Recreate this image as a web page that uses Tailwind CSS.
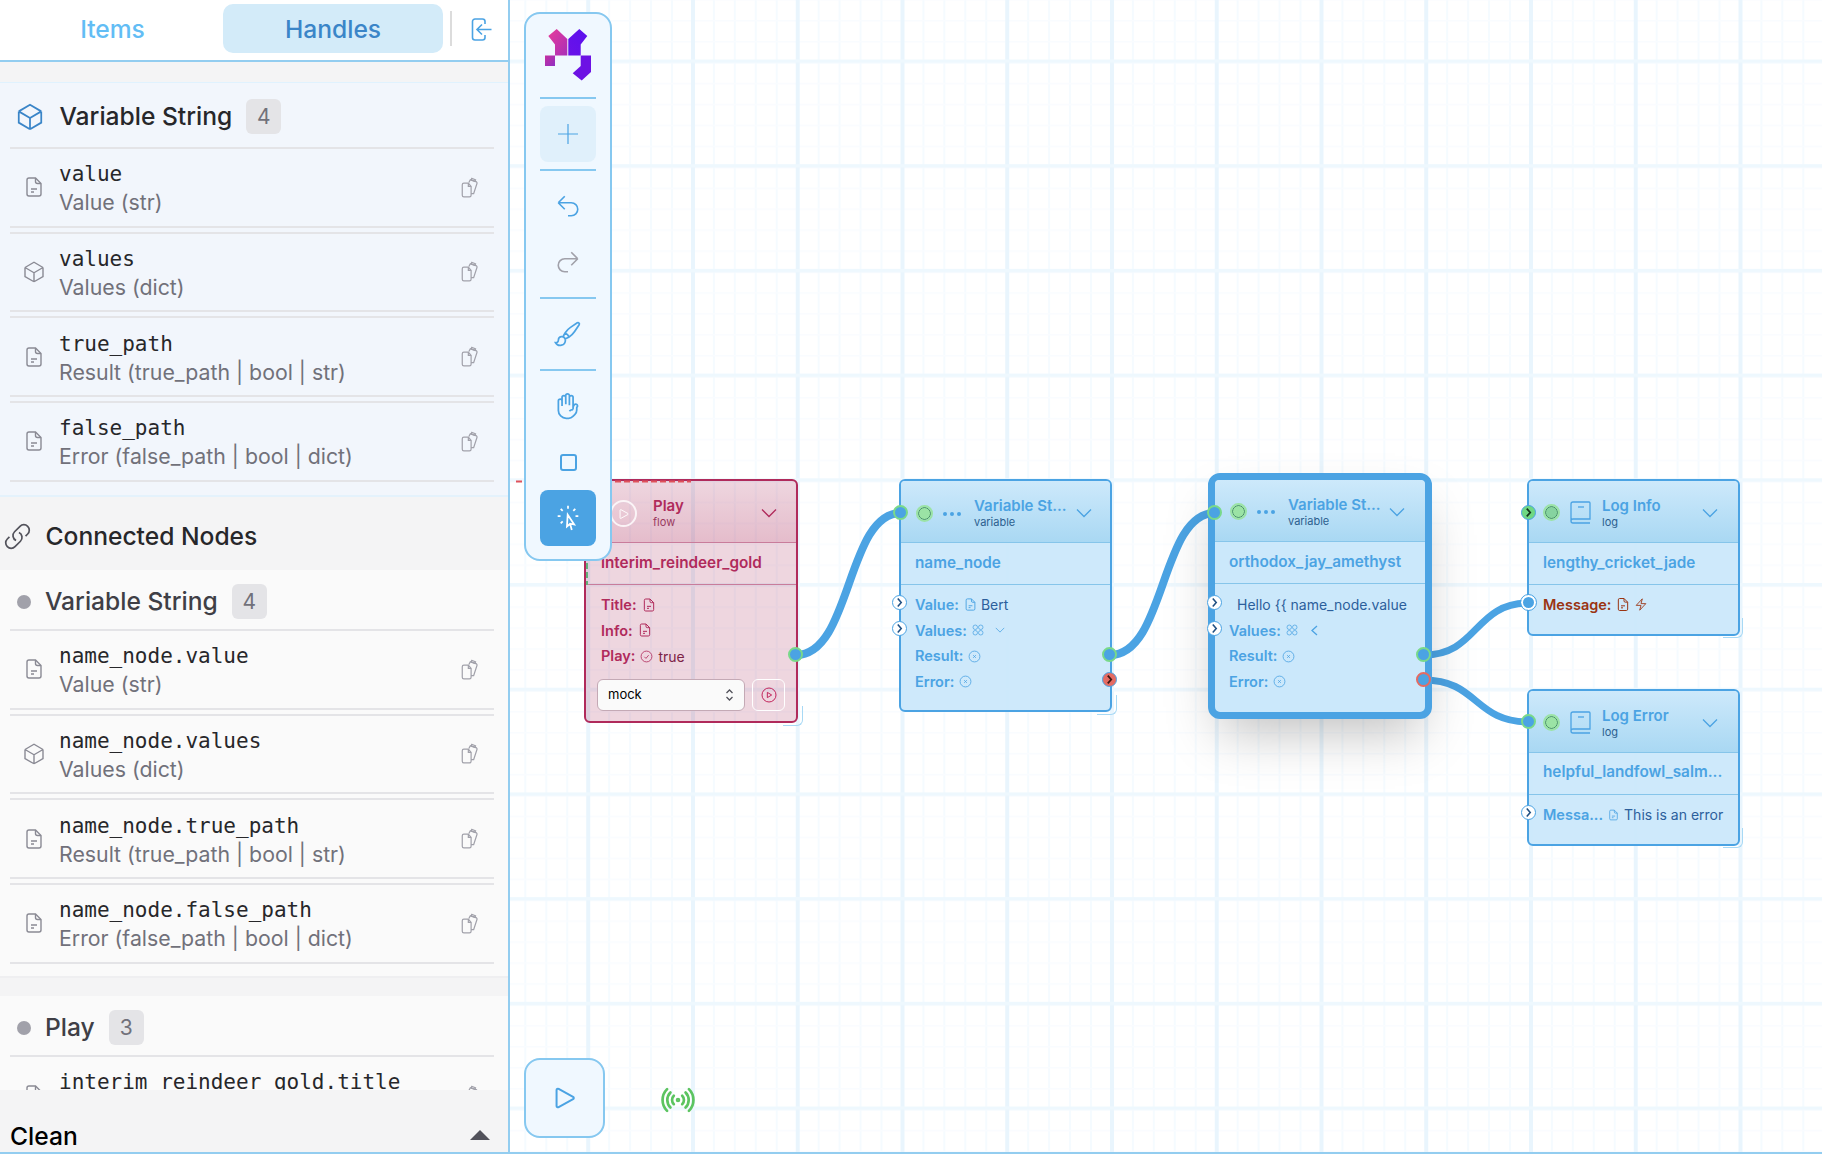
<!DOCTYPE html>
<html lang="en">
<head>
    <meta charset="UTF-8">
    <title>Flow editor</title>
    <script src="https://cdn.jsdelivr.net/npm/@tailwindcss/browser@4"></script>
</head>
<body class="font-['Inter',sans-serif] bg-white">
    <!-- icon sprite -->
    <svg class="hidden">
        <symbol id="doc" viewBox="0 0 24 24"><path d="M13.5 3H7a2 2 0 0 0-2 2v14a2 2 0 0 0 2 2h10a2 2 0 0 0 2-2V8.5z"/><path d="M13.5 3v3.5a2 2 0 0 0 2 2H19"/><path d="M9 14h6M9 17h3"/></symbol>
        <symbol id="cube" viewBox="0 0 24 24"><path d="M21 7.5l-9-5.25L3 7.5m18 0l-9 5.25m9-5.25v9l-9 5.25M3 7.5l9 5.25M3 7.5v9l9 5.25m0-9v9"/></symbol>
        <symbol id="copy" viewBox="0 0 16 19"><path d="M6.500 5.500H2.500A1.500 1.500 0 0 0 1 7v9.500A1.500 1.500 0 0 0 2.500 18h5A1.500 1.500 0 0 0 9 16.500V8.500z"/><path d="M6.500 5.500v3H9"/><path d="M7 5l1.300-2.500 5.200 1.700a1.300 1.300 0 0 1 .8 1.700L11.300 15H9"/><path d="M9.500 1.300l3.500 1.200-.5 1.500-3.500-1.200z"/></symbol>
        <symbol id="chev" viewBox="0 0 16 10"><path d="M1 1.500l7 7 7-7"/></symbol>
        <symbol id="xc" viewBox="0 0 24 24"><circle cx="12" cy="12" r="10"/><path d="M9.500 9.500l5 5m0-5l-5 5"/></symbol>
        <symbol id="four" viewBox="0 0 24 24"><circle cx="6.500" cy="6.500" r="4.500"/><circle cx="17.500" cy="6.500" r="4.500"/><circle cx="6.500" cy="17.500" r="4.500"/><circle cx="17.500" cy="17.500" r="4.500"/></symbol>
        <symbol id="book" viewBox="0 0 21 23"><path d="M3 1h16a1 1 0 0 1 1 1v16H3a2 2 0 0 0-2 2V3a2 2 0 0 1 2-2z"/><path d="M1 20a2 2 0 0 0 2 2h17"/><path d="M8 6h6"/></symbol>
        <symbol id="hchev" viewBox="0 0 15 15"><path d="M5.500 3l4 4.500-4 4.500"/></symbol>
    </svg>

    <div class="flex w-[1822px] h-[1154px] overflow-hidden border-b-2 border-[#93cdf0]">

        <!-- sidebar -->
        <aside class="w-[510px] shrink-0 flex flex-col border-r-2 border-[#93cdf0] bg-white">
            <div class="h-[62px] shrink-0 flex items-start border-b-2 border-[#93cdf0]">
                <div class="w-[225px] h-[49px] mt-1 pt-[2px] flex items-center justify-center text-[24.6px] font-medium text-[#62bdf5]">Items</div>
                <div class="w-[220px] -ml-[2px] h-[49px] mt-1 pt-[2px] flex items-center justify-center rounded-[10px] bg-[#d3ebf9] text-[24.6px] font-medium text-[#3a85c8]">Handles</div>
                <div class="w-[2px] h-[35px] mt-[11px] ml-[7px] bg-[#dcdcdc]"></div>
                <svg class="w-[21px] h-[23px] mt-[18px] ml-[19px] fill-none stroke-[#4ba3e3] stroke-[1.6]" viewBox="0 0 21 23"><path d="M14 6V3.500A2.500 2.500 0 0 0 11.500 1H4a2.500 2.500 0 0 0-2.500 2.500v16A2.500 2.500 0 0 0 4 22h7.500a2.500 2.500 0 0 0 2.500-2.500V17"/><path d="M20.500 11.500H6M11 6.500l-5 5 5 5"/></svg>
            </div>

            <div class="flex-1 min-h-0 overflow-hidden">
                <div class="h-[21px] bg-[#f4f4f5] border-b border-[#e0f2fe]"></div>

                <!-- own handles -->
                <section class="bg-[#f2f6fc] pb-[13.3px] border-b-2 border-[#e4f2fc]">
                    <div class="ml-[10px] mr-[14px] h-[66px] pt-[3px] flex items-center border-b-2 border-[#e4e4e7]">
                        <svg class="w-[30px] h-[30px] ml-[5px] fill-none stroke-[#3a85c8] stroke-[1.4]"><use href="#cube"/></svg>
                        <span class="ml-[14.5px] text-[24.6px] font-medium text-[#27272a]">Variable String</span>
                        <span class="ml-[14px] w-[35px] h-[35px] flex items-center justify-center rounded-md bg-[#e4e4e7] text-[21px] text-[#71717a]">4</span>
                    </div>
                    <div class="ml-[10px] mr-[14px] h-[78.67px] flex items-center border-b-2 border-[#e4e4e7]">
                        <svg class="w-[24px] h-[24px] ml-[12px] fill-none stroke-[#8a8a94] stroke-[1.4]"><use href="#doc"/></svg>
                        <div class="ml-[13px] pt-[3px] flex-1"><div class="font-['DejaVu_Sans_Mono',monospace] text-[21px] leading-[28px] text-[#27272a]">value</div><div class="text-[21.3px] leading-[29px] text-[#71717a]">Value (str)</div></div>
                        <svg class="w-[18px] h-[21px] mr-[15px] fill-none stroke-[#a1a1aa] stroke-[1.1]"><use href="#copy"/></svg>
                    </div>
                    <div class="ml-[10px] mr-[14px] mt-[4px] h-[80.67px] flex items-center border-y-2 border-[#e4e4e7]">
                        <svg class="w-[24px] h-[24px] ml-[12px] fill-none stroke-[#8a8a94] stroke-[1.4]"><use href="#cube"/></svg>
                        <div class="ml-[13px] pt-[3px] flex-1"><div class="font-['DejaVu_Sans_Mono',monospace] text-[21px] leading-[28px] text-[#27272a]">values</div><div class="text-[21.3px] leading-[29px] text-[#71717a]">Values (dict)</div></div>
                        <svg class="w-[18px] h-[21px] mr-[15px] fill-none stroke-[#a1a1aa] stroke-[1.1]"><use href="#copy"/></svg>
                    </div>
                    <div class="ml-[10px] mr-[14px] mt-[4px] h-[80.67px] flex items-center border-y-2 border-[#e4e4e7]">
                        <svg class="w-[24px] h-[24px] ml-[12px] fill-none stroke-[#8a8a94] stroke-[1.4]"><use href="#doc"/></svg>
                        <div class="ml-[13px] pt-[3px] flex-1"><div class="font-['DejaVu_Sans_Mono',monospace] text-[21px] leading-[28px] text-[#27272a]">true_path</div><div class="text-[21.3px] leading-[29px] text-[#71717a]">Result (true_path | bool | str)</div></div>
                        <svg class="w-[18px] h-[21px] mr-[15px] fill-none stroke-[#a1a1aa] stroke-[1.1]"><use href="#copy"/></svg>
                    </div>
                    <div class="ml-[10px] mr-[14px] mt-[4px] h-[80.67px] flex items-center border-y-2 border-[#e4e4e7]">
                        <svg class="w-[24px] h-[24px] ml-[12px] fill-none stroke-[#8a8a94] stroke-[1.4]"><use href="#doc"/></svg>
                        <div class="ml-[13px] pt-[3px] flex-1"><div class="font-['DejaVu_Sans_Mono',monospace] text-[21px] leading-[28px] text-[#27272a]">false_path</div><div class="text-[21.3px] leading-[29px] text-[#71717a]">Error (false_path | bool | dict)</div></div>
                        <svg class="w-[18px] h-[21px] mr-[15px] fill-none stroke-[#a1a1aa] stroke-[1.1]"><use href="#copy"/></svg>
                    </div>
                </section>

                <!-- connected nodes -->
                <div class="h-[73px] pt-[6px] flex items-center bg-[#f4f4f5]">
                    <svg class="w-[29px] h-[29px] ml-[3px] fill-none stroke-[#52525b] stroke-[1.4]" viewBox="0 0 24 24"><path d="M13.190 8.688a4.500 4.500 0 0 1 1.242 7.244l-4.500 4.500a4.500 4.500 0 0 1-6.364-6.364l1.757-1.757m13.350-.622l1.757-1.757a4.500 4.500 0 0 0-6.364-6.364l-4.500 4.500a4.500 4.500 0 0 0 1.242 7.244"/></svg>
                    <span class="ml-[13.5px] text-[24.6px] font-medium text-[#27272a]">Connected Nodes</span>
                </div>

                <section class="bg-[#fafafa] pb-[12.3px] border-b-2 border-[#efeff1]">
                    <div class="ml-[10px] mr-[14px] h-[61px] pt-[5px] flex items-center border-b-2 border-[#e4e4e7]">
                        <span class="w-[14px] h-[14px] ml-[7px] rounded-full bg-[#a1a1aa]"></span>
                        <span class="ml-[14px] text-[24.6px] font-medium text-[#3f3f46]">Variable String</span>
                        <span class="ml-[14px] w-[35px] h-[35px] flex items-center justify-center rounded-md bg-[#e4e4e7] text-[21px] text-[#71717a]">4</span>
                    </div>
                    <div class="ml-[10px] mr-[14px] h-[78.67px] flex items-center border-b-2 border-[#e4e4e7]">
                        <svg class="w-[24px] h-[24px] ml-[12px] fill-none stroke-[#8a8a94] stroke-[1.4]"><use href="#doc"/></svg>
                        <div class="ml-[13px] pt-[3px] flex-1"><div class="font-['DejaVu_Sans_Mono',monospace] text-[21px] leading-[28px] text-[#27272a]">name_node.value</div><div class="text-[21.3px] leading-[29px] text-[#71717a]">Value (str)</div></div>
                        <svg class="w-[18px] h-[21px] mr-[15px] fill-none stroke-[#a1a1aa] stroke-[1.1]"><use href="#copy"/></svg>
                    </div>
                    <div class="ml-[10px] mr-[14px] mt-[4px] h-[80.67px] flex items-center border-y-2 border-[#e4e4e7]">
                        <svg class="w-[24px] h-[24px] ml-[12px] fill-none stroke-[#8a8a94] stroke-[1.4]"><use href="#cube"/></svg>
                        <div class="ml-[13px] pt-[3px] flex-1"><div class="font-['DejaVu_Sans_Mono',monospace] text-[21px] leading-[28px] text-[#27272a]">name_node.values</div><div class="text-[21.3px] leading-[29px] text-[#71717a]">Values (dict)</div></div>
                        <svg class="w-[18px] h-[21px] mr-[15px] fill-none stroke-[#a1a1aa] stroke-[1.1]"><use href="#copy"/></svg>
                    </div>
                    <div class="ml-[10px] mr-[14px] mt-[4px] h-[80.67px] flex items-center border-y-2 border-[#e4e4e7]">
                        <svg class="w-[24px] h-[24px] ml-[12px] fill-none stroke-[#8a8a94] stroke-[1.4]"><use href="#doc"/></svg>
                        <div class="ml-[13px] pt-[3px] flex-1"><div class="font-['DejaVu_Sans_Mono',monospace] text-[21px] leading-[28px] text-[#27272a]">name_node.true_path</div><div class="text-[21.3px] leading-[29px] text-[#71717a]">Result (true_path | bool | str)</div></div>
                        <svg class="w-[18px] h-[21px] mr-[15px] fill-none stroke-[#a1a1aa] stroke-[1.1]"><use href="#copy"/></svg>
                    </div>
                    <div class="ml-[10px] mr-[14px] mt-[4px] h-[80.67px] flex items-center border-y-2 border-[#e4e4e7]">
                        <svg class="w-[24px] h-[24px] ml-[12px] fill-none stroke-[#8a8a94] stroke-[1.4]"><use href="#doc"/></svg>
                        <div class="ml-[13px] pt-[3px] flex-1"><div class="font-['DejaVu_Sans_Mono',monospace] text-[21px] leading-[28px] text-[#27272a]">name_node.false_path</div><div class="text-[21.3px] leading-[29px] text-[#71717a]">Error (false_path | bool | dict)</div></div>
                        <svg class="w-[18px] h-[21px] mr-[15px] fill-none stroke-[#a1a1aa] stroke-[1.1]"><use href="#copy"/></svg>
                    </div>
                </section>

                <div class="h-[18px] bg-[#f4f4f5]"></div>

                <section class="bg-[#fafafa]">
                    <div class="ml-[10px] mr-[14px] h-[61px] pt-[5px] flex items-center border-b-2 border-[#e4e4e7]">
                        <span class="w-[14px] h-[14px] ml-[7px] rounded-full bg-[#a1a1aa]"></span>
                        <span class="ml-[14px] text-[24.6px] font-medium text-[#3f3f46]">Play</span>
                        <span class="ml-[14px] w-[35px] h-[35px] flex items-center justify-center rounded-md bg-[#e4e4e7] text-[21px] text-[#71717a]">3</span>
                    </div>
                    <div class="ml-[10px] mr-[14px] h-[78.67px] flex items-center border-b-2 border-[#e4e4e7]">
                        <svg class="w-[24px] h-[24px] ml-[12px] fill-none stroke-[#8a8a94] stroke-[1.4]"><use href="#doc"/></svg>
                        <div class="ml-[13px] pt-[3px] flex-1"><div class="font-['DejaVu_Sans_Mono',monospace] text-[21px] leading-[28px] text-[#27272a]">interim_reindeer_gold.title</div><div class="h-[29px]"></div></div>
                        <svg class="w-[18px] h-[21px] mr-[15px] fill-none stroke-[#a1a1aa] stroke-[1.1]"><use href="#copy"/></svg>
                    </div>
                </section>
            </div>

            <div class="h-[62px] shrink-0 flex items-end justify-between px-[10px] bg-[#f4f4f5]">
                <span class="text-[24.6px] leading-8 font-medium text-black">Clean</span>
                <svg class="w-[20px] h-[10px] mb-[12px] mr-[8px]" viewBox="0 0 20 10"><path d="M10 0l10 10H0z" fill="#52525b"/></svg>
            </div>
        </aside>

        <!-- canvas -->
        <main class="relative flex-1 overflow-hidden bg-white">
            <!-- grid and edges, page coordinates -->
            <svg class="absolute inset-0 w-[1312px] h-[1152px]" viewBox="510 0 1312 1152">
                <defs>
                    <pattern id="minor" patternUnits="userSpaceOnUse" x="1509" y="20" width="20.95" height="20.94">
                        <rect width="2" height="20.94" fill="#f5fbff"/>
                        <rect width="20.95" height="1.500" fill="#f9fcff"/>
                    </pattern>
                    <pattern id="major" patternUnits="userSpaceOnUse" x="1529" y="59.500" width="104.750" height="104.700">
                        <rect width="4" height="104.700" fill="#e9f5fd"/>
                        <rect width="104.750" height="3.500" fill="#eef8fe"/>
                    </pattern>
                </defs>
                <rect x="510" width="1312" height="1152" fill="url(#minor)"/>
                <rect x="510" width="1312" height="1152" fill="url(#major)"/>
                <g fill="none" stroke="#4ba3e3">
                    <path stroke-width="8" d="M796 655C852 655 846 513 901 513"/>
                    <path stroke-width="8" d="M1110 655C1166 655 1160 513 1215 513"/>
                    <path stroke-width="7" d="M1424 655C1478 655 1474 603 1529 603"/>
                    <path stroke-width="7" d="M1424 680C1478 680 1474 722 1529 722"/>
                </g>
            </svg>

            <!-- Play node -->
            <div class="absolute left-[74px] top-[479px] w-[214px] h-[244px] rounded-md border-2 border-[#b02a5b] bg-[#a8325f]/20 text-[#b02a5b]">
                <div class="h-[62px] pt-[4px] flex items-center pl-[24px] pr-[19px] border-b border-[#c97c9b] rounded-t-[4px] bg-linear-to-b from-[#b02a5b]/0 to-[#b02a5b]/15">
                    <span class="w-[27px] h-[27px] flex items-center justify-center rounded-full border-2 border-white/80">
                        <svg class="w-[14px] h-[14px] fill-none stroke-white stroke-[1.6]" viewBox="0 0 24 24"><path d="M5.250 5.653c0-.856.917-1.398 1.667-.986l11.540 6.348a1.125 1.125 0 0 1 0 1.971l-11.540 6.347a1.125 1.125 0 0 1-1.667-.985V5.653z"/></svg>
                    </span>
                    <div class="ml-[16px] -mt-[2px]"><div class="text-[15px] leading-[18px] font-semibold">Play</div><div class="text-[11px] leading-[14px] text-[#9a3a60]">flow</div></div>
                    <svg class="w-[16px] h-[10px] ml-auto -mt-[2px] fill-none stroke-current stroke-[1.3]"><use href="#chev"/></svg>
                </div>
                <div class="h-[42px] flex items-center pl-[15px] border-b border-[#c97c9b] text-[15.3px] font-semibold">interim_reindeer_gold</div>
                <div class="pt-[7px] pl-[15px] text-[14.5px] font-semibold">
                    <div class="h-[25.67px] flex items-center">Title:<svg class="w-[16px] h-[16px] ml-[4px] fill-none stroke-current stroke-[1.5]"><use href="#doc"/></svg></div>
                    <div class="h-[25.67px] flex items-center">Info:<svg class="w-[16px] h-[16px] ml-[4px] fill-none stroke-current stroke-[1.5]"><use href="#doc"/></svg></div>
                    <div class="h-[25.67px] flex items-center">Play:<svg class="w-[13px] h-[13px] ml-[5px] fill-none stroke-current stroke-[1.5]" viewBox="0 0 24 24"><circle cx="12" cy="12" r="10"/><path d="M8 12.500l3 3 5-6"/></svg><span class="ml-[5px] text-[14px] font-normal text-[#7d2347]">true</span></div>
                </div>
                <div class="flex mt-[10px] ml-[11px] gap-[7px]">
                    <div class="w-[148px] h-[32px] flex items-center justify-between px-[10px] rounded-md bg-[#fafafa] border border-[#c4a9b5] text-[13px] text-black">mock
                        <svg class="w-[9px] h-[14px] fill-none stroke-[#52525b] stroke-[1.3]" viewBox="0 0 9 14"><path d="M1.500 5l3-3 3 3M1.500 9l3 3 3-3"/></svg>
                    </div>
                    <div class="w-[33px] h-[32px] flex items-center justify-center rounded-md border border-white">
                        <svg class="w-[16px] h-[16px] fill-none stroke-[#c2255c] stroke-[1.5]" viewBox="0 0 24 24"><circle cx="12" cy="12" r="10.500"/><path d="M9.500 8v8l6.500-4z"/></svg>
                    </div>
                </div>
            </div>
            <div class="absolute left-[273px] top-[706px] w-[20px] h-[20px] rounded-br-md border-r border-b border-[#a8d9f5]"></div>

            <!-- selection dashes around the play node -->
            <svg class="absolute inset-0 w-[1312px] h-[1152px]" viewBox="510 0 1312 1152" fill="none">
                <path d="M516 481.500H691" stroke="#e0525b" stroke-width="2" stroke-dasharray="6 3"/>
                <path d="M587 545V585" stroke="#5fb27a" stroke-width="2" stroke-dasharray="6 3"/>
            </svg>

            <!-- name_node -->
            <div class="absolute left-[389px] top-[479px] w-[213px] h-[233px] rounded-md border-2 border-[#4ba3e3] bg-[#cbe8fb]/95 text-[#4ba3e3]">
                <div class="h-[62px] pt-[4px] flex items-center pl-[17px] pr-[18px] border-b border-[#86c5ea] rounded-t-[4px] bg-linear-to-b from-[#cde9fb] to-[#a9d8f3]">
                    <span class="w-[13px] h-[13px] rounded-full border border-[#3f8a5c] bg-[#9be3a5] outline-2 outline-[#9be3a5]"></span>
                    <span class="ml-[12px] w-[18px] flex justify-between"><i class="w-[4px] h-[4px] rounded-full bg-[#4ba3e3]"></i><i class="w-[4px] h-[4px] rounded-full bg-[#4ba3e3]"></i><i class="w-[4px] h-[4px] rounded-full bg-[#4ba3e3]"></i></span>
                    <div class="ml-[13px] -mt-[2px]"><div class="text-[15px] leading-[18px] font-semibold">Variable St...</div><div class="text-[11px] leading-[14px] text-[#2c5f8f]">variable</div></div>
                    <svg class="w-[16px] h-[10px] ml-auto -mt-[2px] fill-none stroke-current stroke-[1.3]"><use href="#chev"/></svg>
                </div>
                <div class="h-[42px] flex items-center pl-[14px] border-b border-[#86c5ea] text-[15.3px] font-semibold">name_node</div>
                <div class="pt-[7px] pl-[14px] text-[14.5px] font-semibold">
                    <div class="h-[25.67px] flex items-center">Value:<svg class="w-[15px] h-[15px] ml-[4px] fill-none stroke-current stroke-[1.5]"><use href="#doc"/></svg><span class="ml-[3px] text-[14px] font-normal text-[#2c5f9c]">Bert</span></div>
                    <div class="h-[25.67px] flex items-center">Values:<svg class="w-[12px] h-[12px] ml-[5px] fill-none stroke-current stroke-[1.5]"><use href="#four"/></svg><svg class="w-[10px] h-[6px] ml-[11px] fill-none stroke-current stroke-[1.3]"><use href="#chev"/></svg></div>
                    <div class="h-[25.67px] flex items-center">Result:<svg class="w-[13px] h-[13px] ml-[5px] fill-none stroke-current stroke-[1.5]"><use href="#xc"/></svg></div>
                    <div class="h-[25.67px] flex items-center">Error:<svg class="w-[13px] h-[13px] ml-[5px] fill-none stroke-current stroke-[1.5]"><use href="#xc"/></svg></div>
                </div>
            </div>
            <div class="absolute left-[587px] top-[695px] w-[20px] h-[20px] rounded-br-md border-r border-b border-[#a8d9f5]"></div>

            <!-- orthodox_jay_amethyst, selected -->
            <div class="absolute left-[698px] top-[473px] w-[224px] h-[246px] rounded-xl border-[7px] border-[#4ba3e3] bg-[#cbe8fb] text-[#4ba3e3] shadow-2xl">
                <div class="h-[62px] pt-[2px] flex items-center pl-[17px] pr-[20px] border-b border-[#86c5ea] rounded-t-[4px] bg-linear-to-b from-[#cde9fb] to-[#a9d8f3]">
                    <span class="w-[13px] h-[13px] rounded-full border border-[#3f8a5c] bg-[#9be3a5] outline-2 outline-[#9be3a5]"></span>
                    <span class="ml-[12px] w-[18px] flex justify-between"><i class="w-[4px] h-[4px] rounded-full bg-[#4ba3e3]"></i><i class="w-[4px] h-[4px] rounded-full bg-[#4ba3e3]"></i><i class="w-[4px] h-[4px] rounded-full bg-[#4ba3e3]"></i></span>
                    <div class="ml-[13px]"><div class="text-[15px] leading-[18px] font-semibold">Variable St...</div><div class="text-[11px] leading-[14px] text-[#2c5f8f]">variable</div></div>
                    <svg class="w-[16px] h-[10px] ml-auto fill-none stroke-current stroke-[1.3]"><use href="#chev"/></svg>
                </div>
                <div class="h-[42px] flex items-center pl-[14px] border-b border-[#86c5ea] text-[15.3px] font-semibold whitespace-nowrap">orthodox_jay_amethyst</div>
                <div class="pt-[8px] pl-[14px] text-[14.5px] font-semibold">
                    <div class="h-[25.67px] flex items-center pl-[8px] text-[14px] font-normal whitespace-nowrap text-[#2c5f9c]">Hello {{ name_node.value</div>
                    <div class="h-[25.67px] flex items-center">Values:<svg class="w-[12px] h-[12px] ml-[5px] fill-none stroke-current stroke-[1.5]"><use href="#four"/></svg><svg class="w-[7px] h-[11px] ml-[13px] fill-none stroke-current stroke-[1.3]" viewBox="0 0 7 11"><path d="M6 1L1 5.500 6 10"/></svg></div>
                    <div class="h-[25.67px] flex items-center">Result:<svg class="w-[13px] h-[13px] ml-[5px] fill-none stroke-current stroke-[1.5]"><use href="#xc"/></svg></div>
                    <div class="h-[25.67px] flex items-center">Error:<svg class="w-[13px] h-[13px] ml-[5px] fill-none stroke-current stroke-[1.5]"><use href="#xc"/></svg></div>
                </div>
            </div>

            <!-- Log Info -->
            <div class="absolute left-[1017px] top-[479px] w-[213px] h-[157px] rounded-md border-2 border-[#4ba3e3] bg-[#cbe8fb]/95 text-[#4ba3e3]">
                <div class="h-[62px] pt-[2px] flex items-center pl-[16px] pr-[20px] border-b border-[#86c5ea] rounded-t-[4px] bg-linear-to-b from-[#cde9fb] to-[#a9d8f3]">
                    <span class="w-[13px] h-[13px] rounded-full border border-[#3f8a5c] bg-[#86d3a0] outline-2 outline-[#9be3a5]"></span>
                    <svg class="w-[21px] h-[23px] ml-[12px] fill-none stroke-current stroke-[1.3]"><use href="#book"/></svg>
                    <div class="ml-[11px]"><div class="text-[15px] leading-[18px] font-semibold">Log Info</div><div class="text-[11px] leading-[14px] text-[#2c5f8f]">log</div></div>
                    <svg class="w-[16px] h-[10px] ml-auto fill-none stroke-current stroke-[1.3]"><use href="#chev"/></svg>
                </div>
                <div class="h-[42px] flex items-center pl-[14px] border-b border-[#86c5ea] text-[15.3px] font-semibold">lengthy_cricket_jade</div>
                <div class="pt-[7px] pl-[14px] text-[14.5px] font-semibold text-[#9a3412]">
                    <div class="h-[25.67px] flex items-center">Message:<svg class="w-[16px] h-[17px] ml-[4px] fill-none stroke-current stroke-[1.5]"><use href="#doc"/></svg><svg class="w-[14px] h-[15px] ml-[3px] fill-none stroke-current stroke-[1.5]" viewBox="0 0 24 24"><path d="M3.750 13.500l10.500-11.250L12 10.500h8.250L9.750 21.750 12 13.500H3.750z"/></svg></div>
                </div>
            </div>
            <div class="absolute left-[1213px] top-[618px] w-[20px] h-[20px] rounded-br-md border-r border-b border-[#a8d9f5]"></div>

            <!-- Log Error -->
            <div class="absolute left-[1017px] top-[689px] w-[213px] h-[157px] rounded-md border-2 border-[#4ba3e3] bg-[#cbe8fb]/95 text-[#4ba3e3]">
                <div class="h-[62px] pt-[2px] flex items-center pl-[16px] pr-[20px] border-b border-[#86c5ea] rounded-t-[4px] bg-linear-to-b from-[#cde9fb] to-[#a9d8f3]">
                    <span class="w-[13px] h-[13px] rounded-full border border-[#3f8a5c] bg-[#9be3a5] outline-2 outline-[#9be3a5]"></span>
                    <svg class="w-[21px] h-[23px] ml-[12px] fill-none stroke-current stroke-[1.3]"><use href="#book"/></svg>
                    <div class="ml-[11px]"><div class="text-[15px] leading-[18px] font-semibold">Log Error</div><div class="text-[11px] leading-[14px] text-[#2c5f8f]">log</div></div>
                    <svg class="w-[16px] h-[10px] ml-auto fill-none stroke-current stroke-[1.3]"><use href="#chev"/></svg>
                </div>
                <div class="h-[42px] pb-[2px] flex items-center pl-[14px] border-b border-[#86c5ea] text-[15.3px] font-semibold whitespace-nowrap">helpful_landfowl_salm...</div>
                <div class="pt-[7px] pl-[14px] text-[14.5px] font-semibold">
                    <div class="h-[25.67px] flex items-center">Messa...<svg class="w-[13px] h-[14px] ml-[4px] fill-none stroke-current stroke-[1.5]"><use href="#doc"/></svg><span class="ml-[4px] text-[14px] font-normal text-[#2c5f9c]">This is an error</span></div>
                </div>
            </div>
            <div class="absolute left-[1213px] top-[828px] w-[20px] h-[20px] rounded-br-md border-r border-b border-[#a8d9f5]"></div>

            <!-- handles -->
            <span class="absolute left-[278px] top-[647px] w-[15px] h-[15px] rounded-full bg-[#4ba3e3] border-2 border-[#79d98a]"></span>
            <span class="absolute left-[383px] top-[505px] w-[15px] h-[15px] rounded-full bg-[#4ba3e3] border-2 border-[#79d98a]"></span>
            <span class="absolute left-[382px] top-[595px] w-[15px] h-[15px] rounded-full bg-white border border-[#4ba3e3] text-[#1f4f82]"><svg class="w-[13px] h-[13px] fill-none stroke-current stroke-[1.8]"><use href="#hchev"/></svg></span>
            <span class="absolute left-[382px] top-[621px] w-[15px] h-[15px] rounded-full bg-white border border-[#4ba3e3] text-[#1f4f82]"><svg class="w-[13px] h-[13px] fill-none stroke-current stroke-[1.8]"><use href="#hchev"/></svg></span>
            <span class="absolute left-[592px] top-[647px] w-[15px] h-[15px] rounded-full bg-[#4ba3e3] border-2 border-[#79d98a]"></span>
            <span class="absolute left-[592px] top-[672px] w-[15px] h-[15px] rounded-full bg-[#e56b62] border border-[#4ba3e3] text-[#3b1512]"><svg class="w-[13px] h-[13px] fill-none stroke-current stroke-[2]"><use href="#hchev"/></svg></span>
            <span class="absolute left-[697px] top-[505px] w-[15px] h-[15px] rounded-full bg-[#4ba3e3] border-2 border-[#79d98a]"></span>
            <span class="absolute left-[697px] top-[595px] w-[15px] h-[15px] rounded-full bg-white border border-[#4ba3e3] text-[#1f4f82]"><svg class="w-[13px] h-[13px] fill-none stroke-current stroke-[1.8]"><use href="#hchev"/></svg></span>
            <span class="absolute left-[697px] top-[621px] w-[15px] h-[15px] rounded-full bg-white border border-[#4ba3e3] text-[#1f4f82]"><svg class="w-[13px] h-[13px] fill-none stroke-current stroke-[1.8]"><use href="#hchev"/></svg></span>
            <span class="absolute left-[906px] top-[647px] w-[15px] h-[15px] rounded-full bg-[#4ba3e3] border-2 border-[#79d98a]"></span>
            <span class="absolute left-[906px] top-[672px] w-[15px] h-[15px] rounded-full bg-[#4ba3e3] border-2 border-[#e56b62]"></span>
            <span class="absolute left-[1011px] top-[505px] w-[15px] h-[15px] rounded-full bg-[#6fd883] border border-[#4ba3e3] text-[#14361e]"><svg class="w-[13px] h-[13px] fill-none stroke-current stroke-[2]"><use href="#hchev"/></svg></span>
            <span class="absolute left-[1011px] top-[595px] w-[15px] h-[15px] rounded-full bg-[#4ba3e3] border-2 border-white outline outline-[#4ba3e3]"></span>
            <span class="absolute left-[1011px] top-[714px] w-[15px] h-[15px] rounded-full bg-[#4ba3e3] border-2 border-[#79d98a]"></span>
            <span class="absolute left-[1011px] top-[805px] w-[15px] h-[15px] rounded-full bg-white border border-[#4ba3e3] text-[#1f4f82]"><svg class="w-[13px] h-[13px] fill-none stroke-current stroke-[1.8]"><use href="#hchev"/></svg></span>

            <!-- toolbar -->
            <div class="absolute left-[14px] top-[12px] w-[88px] h-[549px] flex flex-col items-center rounded-[16px] border-2 border-[#86c8f0] bg-[#f0f8ff] text-[#4ba3e3]">
                <svg class="w-[56px] h-[76px] shrink-0" viewBox="540 14 56 76">
                    <defs>
                        <linearGradient id="lg1" x1="0" y1="0" x2="1" y2="1"><stop offset="0" stop-color="#e83c9a"/><stop offset="1" stop-color="#a92fb8"/></linearGradient>
                        <linearGradient id="lg2" x1="0" y1="0" x2="1" y2="1"><stop offset="0" stop-color="#c5309f"/><stop offset="1" stop-color="#9030c4"/></linearGradient>
                        <linearGradient id="lg3" x1="1" y1="0" x2="0" y2="1"><stop offset="0" stop-color="#5b10ee"/><stop offset="1" stop-color="#6a12e8"/></linearGradient>
                    </defs>
                    <path d="M548.300 36l8.400-7 10.600 10v16.500H555V44.400z" fill="url(#lg1)"/>
                    <path d="M545 55.500h10V66h-10z" fill="url(#lg2)"/>
                    <path d="M568.300 39l11-10 8 7-6.600 8.400v11.100h-12.400z" fill="url(#lg3)"/>
                    <path d="M580.700 55.500H591V72l-9.300 8.600-9-7.300 8-7.300z" fill="#6d12e4"/>
                </svg>
                <div class="w-[56px] h-[2px] my-[7px] shrink-0 bg-[#86c8f0]"></div>
                <div class="w-[56px] h-[56px] shrink-0 flex items-center justify-center rounded-lg bg-[#e0f0fb]">
                    <svg class="w-[22px] h-[22px] fill-none stroke-current stroke-[1.2]" viewBox="0 0 22 22"><path d="M11 1v20M1 11h20"/></svg>
                </div>
                <div class="w-[56px] h-[2px] my-[7px] shrink-0 bg-[#86c8f0]"></div>
                <div class="w-[56px] h-[56px] shrink-0 flex items-center justify-center">
                    <svg class="w-[26px] h-[26px] fill-none stroke-current stroke-[1.5]" viewBox="0 0 24 24"><path d="M9 15L3 9m0 0l6-6M3 9h12a6 6 0 0 1 0 12h-3"/></svg>
                </div>
                <div class="w-[56px] h-[56px] shrink-0 flex items-center justify-center">
                    <svg class="w-[26px] h-[26px] fill-none stroke-[#a1a1aa] stroke-[1.5]" viewBox="0 0 24 24"><path d="M15 15l6-6m0 0l-6-6m6 6H9a6 6 0 0 0 0 12h3"/></svg>
                </div>
                <div class="w-[56px] h-[2px] my-[7px] shrink-0 bg-[#86c8f0]"></div>
                <div class="w-[56px] h-[56px] shrink-0 flex items-center justify-center">
                    <svg class="w-[28px] h-[28px] fill-none stroke-current stroke-[1.5]" viewBox="0 0 24 24"><path d="M9.530 16.122a3 3 0 0 0-5.780 1.128 2.250 2.250 0 0 1-2.400 2.245 4.500 4.500 0 0 0 8.400-2.245c0-.399-.078-.78-.22-1.128zm0 0a15.998 15.998 0 0 0 3.388-1.620m-5.043-.025a15.994 15.994 0 0 1 1.622-3.395m3.420 3.420a15.995 15.995 0 0 0 4.764-4.648l3.876-5.814a1.151 1.151 0 0 0-1.597-1.597L14.146 6.320a15.996 15.996 0 0 0-4.649 4.763m3.420 3.420a6.776 6.776 0 0 0-3.420-3.420"/></svg>
                </div>
                <div class="w-[56px] h-[2px] my-[7px] shrink-0 bg-[#86c8f0]"></div>
                <div class="w-[56px] h-[56px] shrink-0 flex items-center justify-center">
                    <svg class="w-[28px] h-[28px] fill-none stroke-current stroke-[1.5]" viewBox="0 0 24 24"><path d="M10.050 4.575a1.575 1.575 0 1 0-3.150 0v3m3.150-3v-1.500a1.575 1.575 0 0 1 3.150 0v1.500m-3.150 0l.075 5.925m3.075.75V4.575m0 0a1.575 1.575 0 0 1 3.150 0V15M6.900 7.575a1.575 1.575 0 1 0-3.150 0v8.175a6.750 6.750 0 0 0 6.750 6.750h2.018a5.250 5.250 0 0 0 3.712-1.538l1.732-1.732a5.250 5.250 0 0 0 1.538-3.712l.003-2.024a.668.668 0 0 1 .198-.471 1.575 1.575 0 1 0-2.228-2.228 3.818 3.818 0 0 0-1.120 2.687M6.900 7.575V12m6.270 4.318A4.490 4.490 0 0 1 16.350 15"/></svg>
                </div>
                <div class="w-[56px] h-[56px] shrink-0 flex items-center justify-center">
                    <span class="w-[17px] h-[17px] rounded-[3px] border-2 border-current"></span>
                </div>
                <div class="w-[56px] h-[56px] shrink-0 flex items-center justify-center rounded-lg bg-[#4ba3e3]">
                    <svg class="w-[30px] h-[30px] fill-none stroke-white stroke-[1.4]" viewBox="0 0 24 24"><path d="M15.042 21.672L13.684 16.600m0 0l-2.510 2.225.569-9.470 5.227 7.917-3.286-.672zM12 2.250V4.500m5.834.166l-1.591 1.591M20.250 10.500H18M7.757 14.743l-1.590 1.590M6 10.500H3.750m4.007-4.243l-1.590-1.590"/></svg>
                </div>
            </div>

            <!-- run button + connection state -->
            <div class="absolute left-[14px] top-[1058px] w-[81px] h-[80px] flex items-center justify-center rounded-[16px] border-2 border-[#86c8f0] bg-[#f0f8ff]">
                <svg class="w-[30px] h-[30px] fill-none stroke-[#4ba3e3] stroke-[1.6]" viewBox="0 0 24 24"><path d="M5.250 5.653c0-.856.917-1.398 1.667-.986l11.540 6.348a1.125 1.125 0 0 1 0 1.971l-11.540 6.347a1.125 1.125 0 0 1-1.667-.985V5.653z"/></svg>
            </div>
            <svg class="absolute left-[148px] top-[1081px] w-[40px] h-[38px] fill-none stroke-[#5cc460] stroke-[1.7]" viewBox="0 0 24 24" stroke-linecap="round"><path d="M9.348 14.651a3.750 3.750 0 0 1 0-5.303m5.304 0a3.750 3.750 0 0 1 0 5.303m-7.425 2.122a6.750 6.750 0 0 1 0-9.546m9.546 0a6.750 6.750 0 0 1 0 9.546M5.106 18.894c-3.808-3.808-3.808-9.980 0-13.789m13.788 0c3.808 3.808 3.808 9.981 0 13.790"/><circle cx="12" cy="12" r=".6" fill="#5cc460"/></svg>
        </main>
    </div>
</body>
</html>
